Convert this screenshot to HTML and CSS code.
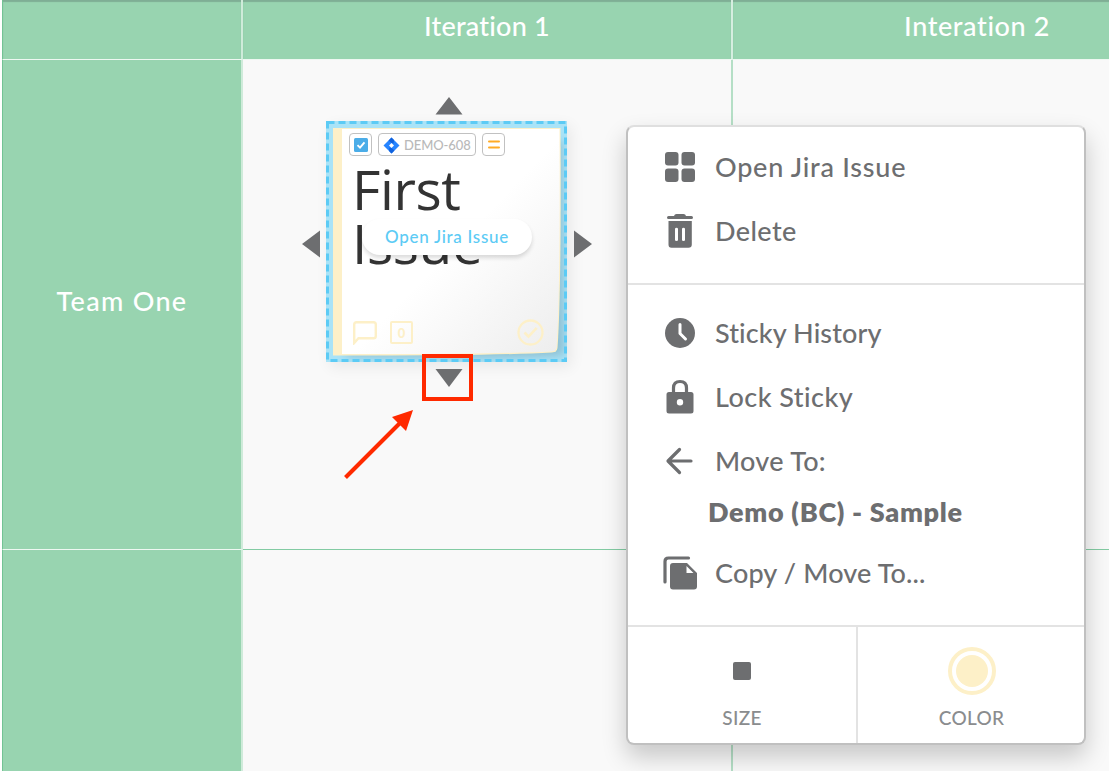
FILE: index.html
```html
<!DOCTYPE html>
<html lang="en">
<head>
<meta charset="utf-8">
<title>Program Board</title>
<link rel="stylesheet" href="styles.css">
</head>
<body>
<main class="board">
  <div class="cell head corner"></div>
  <div class="cell head"><span class="t-iter1">Iteration 1</span></div>
  <div class="cell head last"><span class="t-iter2">Interation 2</span></div>
  <div class="cell team"><span class="t-team">Team One</span></div>
  <div class="cell"></div>
  <div class="cell last"></div>
  <div class="cell team"></div>
  <div class="cell"></div>
  <div class="cell last"></div>
</main>

<section class="sticky">
  <svg class="paper" width="241" height="241" viewBox="0 0 241 241">
    <defs>
      <linearGradient id="sheet" x1="0" y1="0" x2="1" y2="1">
        <stop offset=".52" stop-color="#fff"/><stop offset="1" stop-color="#ededed"/>
      </linearGradient>
      <filter id="soft" x="-10%" y="-10%" width="125%" height="125%"><feGaussianBlur stdDeviation="5"/></filter>
    </defs>
    <rect width="241" height="241" fill="#a9e3f7"/>
    <path d="M20 20H236L238 234Q180 238 20 235Z" fill="#668899" opacity=".4" filter="url(#soft)"/>
    <path d="M7 7H234.500Q235.500 170 231.500 227Q231 231 226 231.500Q160 235 7 234.500Z" fill="#fdf0c8"/>
    <path d="M16 8H233.500Q234.500 170 230.500 226Q230 230 225 230.500Q160 233.500 16 233Z" fill="url(#sheet)"/>
    <rect x="1.500" y="1.500" width="238" height="238" fill="none" stroke="#5ccbf5" stroke-width="3" stroke-dasharray="7 4"/>
  </svg>
  <div class="badges">
    <span class="badge"><svg width="14" height="14" viewBox="0 0 14 14"><rect width="14" height="14" rx="1.500" fill="#4bade8"/><path d="M3.500 7.200L6 9.700L10.500 4.300" fill="none" stroke="#fff" stroke-width="1.900"/></svg></span>
    <span class="badge key"><svg width="17" height="17" viewBox="0 0 17 17"><path d="M8.500.5L16.500 8.500L8.500 16.500L.5 8.500Z" fill="#2684ff"/><path d="M8.500.5L11 3L10.500 6.500L8.500 6L5.500 3.500ZM8.500 16.500L11.500 13.500L8.500 11L6.500 10.500L6 14Z" fill="#1062de"/><path d="M8.500 6L11 8.500L8.500 11L6 8.500Z" fill="#fff"/></svg><span class="t-key">DEMO-608</span></span>
    <span class="badge"><svg width="12" height="10" viewBox="0 0 12 10"><path d="M1 1.500H11M1 7.500H11" stroke="#ffab26" stroke-width="2" stroke-linecap="round"/></svg></span>
  </div>
  <div class="title">First<br>Issue</div>
  <div class="pill"><span class="t-pill">Open Jira Issue</span></div>
  <div class="tools">
    <svg width="24" height="24" viewBox="0 0 24 24"><path d="M1.200 22V3.500Q1.200 1.200 3.500 1.200H20.500Q22.800 1.200 22.800 3.500V15Q22.800 17.300 20.500 17.300H5.500Z" fill="none" stroke="#fdf0c8" stroke-width="2.400"/></svg>
    <span class="count">0</span>
    <svg class="done" width="27" height="27" viewBox="0 0 27 27"><circle cx="13.500" cy="13.500" r="12" fill="none" stroke="#fdf0c8" stroke-width="2.300"/><path d="M7.500 13.500L11.500 17.700L19.700 8.800" fill="none" stroke="#fdf0c8" stroke-width="2.600"/></svg>
  </div>
</section>

<svg class="marks" width="310" height="410" viewBox="290 85 310 410">
  <path d="M449 97L462.500 114.500H435.500ZM449 387L435.500 369H462.500ZM302 244L320 230.500V257.500ZM592 244L574 230.500V257.500Z" fill="#6d6e70"/>
  <rect x="424" y="356" width="47" height="43" fill="none" stroke="#ff2a00" stroke-width="4"/>
  <path d="M345.500 477.500L401 422" stroke="#ff2a00" stroke-width="4"/>
  <path d="M413 410L392 417L406 431Z" fill="#ff2a00"/>
</svg>

<nav class="menu">
  <div class="group first">
    <div class="item"><svg viewBox="0 0 36 36"><g fill="#6d6e70"><rect x="3" y="3" width="13.500" height="13.500" rx="3"/><rect x="19.500" y="3" width="13.500" height="13.500" rx="3"/><rect x="3" y="19.500" width="13.500" height="13.500" rx="3"/><rect x="19.500" y="19.500" width="13.500" height="13.500" rx="3"/></g></svg><span class="t-open">Open Jira Issue</span></div>
    <div class="item"><svg viewBox="0 0 36 36"><path d="M5 4.500Q5 3 6.500 3H12Q12.500 1 14.500 1H21.500Q23.500 1 24 3H29.500Q31 3 31 4.500T29.500 6H6.500Q5 6 5 4.500Z" fill="#6d6e70"/><path fill-rule="evenodd" d="M6.500 8H29.800V31.500Q29.800 34.700 26.500 34.700H9.500Q6.500 34.700 6.500 31.500ZM13 16V27Q13 28 14.500 28T16 27V16Q16 14.700 14.500 14.700T13 16ZM20 16V27Q20 28 21.500 28T23 27V16Q23 14.700 21.500 14.700T20 16Z" fill="#6d6e70"/></svg><span class="t-del">Delete</span></div>
  </div>
  <div class="group second">
    <div class="item"><svg viewBox="0 0 36 36"><circle cx="18" cy="18" r="15" fill="#6d6e70"/><path d="M18 9.500V18.500L23.500 24" fill="none" stroke="#fff" stroke-width="3" stroke-linecap="round" stroke-linejoin="round"/></svg><span class="t-hist">Sticky History</span></div>
    <div class="item"><svg viewBox="0 0 36 36"><path d="M11.500 15V9Q11.500 2.500 18 2.500T24.500 9V15" fill="none" stroke="#6d6e70" stroke-width="3.200"/><path fill-rule="evenodd" d="M7 13H29Q31.500 13 31.500 15.500V32Q31.500 34.500 29 34.500H7Q4.500 34.500 4.500 32V15.500Q4.500 13 7 13ZM18 20A3.200 3.200 0 1 0 18 26.400A3.200 3.200 0 1 0 18 20Z" fill="#6d6e70"/></svg><span class="t-lock">Lock Sticky</span></div>
    <div class="item"><svg viewBox="0 0 36 36"><path d="M17.500 6.500L6 18L17.500 29.500M6.500 18H29" fill="none" stroke="#6d6e70" stroke-width="3.200" stroke-linecap="round" stroke-linejoin="round"/></svg><span class="t-move">Move To:</span></div>
    <div class="target"><span class="t-demo">Demo (BC) - Sample</span></div>
    <div class="item"><svg viewBox="0 0 36 36"><path d="M3 27V6.500Q3 3 6.500 3H26.500" fill="none" stroke="#6d6e70" stroke-width="3.200" stroke-linecap="round"/><path fill-rule="evenodd" d="M11 8H25L35 18V31.500Q35 34.500 32 34.500H11Q8 34.500 8 31.500V11Q8 8 11 8ZM24.500 11V18H31.500Z" fill="#6d6e70"/></svg><span class="t-copy">Copy / Move To...</span></div>
  </div>
  <div class="bottom">
    <div class="option"><div class="swatch"><i class="square"></i></div><span class="t-size">SIZE</span></div>
    <div class="option"><div class="swatch"><i class="ring"></i></div><span class="t-color">COLOR</span></div>
  </div>
</nav>
</body>
</html>
```
FILE: styles.css
```css
* { box-sizing: border-box; }
body {
  margin: 0;
  width: 1109px;
  height: 771px;
  overflow: hidden;
  position: relative;
  background: #fff;
  font-family: Lato, "Liberation Sans", sans-serif;
  font-weight: 500;
  font-variant-ligatures: none;
  color: #6d6e70;
}
span { white-space: nowrap; }
.board {
  display: grid;
  grid-template-columns: 241px 490px 490px;
  grid-template-rows: 60px 490px 490px;
  margin-left: 2px;
  width: 1107px;
  height: 771px;
  overflow: hidden;
  background: #f9f9f9;
}
.cell {
  display: flex;
  align-items: center;
  justify-content: center;
  border-right: 2px solid #b5dfc6;
  border-bottom: 1px solid #83cba3;
}
.cell.head, .cell.team {
  background: #98d4b0;
  border-color: #eef8f2;
  color: #fff;
  font-size: 27px;
}
.cell.head { border-right-color: #d6eee0; box-shadow: inset 0 2px 1px #7fae95; padding-bottom: 8px; }
.cell.team, .cell.corner { border-left: 1px solid #72c394; border-right: 2px solid #cfebda; }
.cell.team { padding-bottom: 8px; }
.t-iter1 { letter-spacing: .2px; }
.t-iter2 { letter-spacing: .6px; }
.t-team { letter-spacing: 1.3px; }

.sticky {
  position: absolute;
  z-index: 1;
  left: 326px;
  top: 121px;
  width: 241px;
  height: 241px;
  padding: 12px 23px 16px 23px;
  display: flex;
  flex-direction: column;
  box-shadow: 4px 5px 14px rgba(0,0,0,.07);
}
.paper { position: absolute; left: 0; top: 0; z-index: -1; }
.badges { display: flex; gap: 6px; height: 23px; }
.badge {
  width: 23px;
  height: 23px;
  border: 1.500px solid #c1c1c1;
  border-radius: 4px;
  display: flex;
  align-items: center;
  justify-content: center;
}
.key { width: 98px; justify-content: flex-start; gap: 4px; padding: 1px 0 0 4px; color: #b9b9b9; font-size: 13px; }
.t-key { letter-spacing: -.1px; }
.title {
  margin: 6px 0 0 3px;
  font: 400 55px/54px "Open Sans", "Noto Sans", sans-serif;
  letter-spacing: -.4px;
  color: #333;
}
.pill {
  position: absolute;
  left: 36px;
  top: 98px;
  width: 170px;
  height: 36px;
  padding-bottom: 1px;
  border-radius: 18px;
  background: #fff;
  box-shadow: 0 3px 4px rgba(0,0,0,.14);
  display: flex;
  align-items: center;
  justify-content: center;
  color: #5ccbf5;
  font-size: 17px;
  letter-spacing: .7px;
}
.tools { display: flex; align-items: center; gap: 13px; margin-top: auto; padding-left: 4px; }
.count {
  width: 23px;
  height: 23px;
  border: 2px solid #fdf0c8;
  border-radius: 2px;
  color: #fdf0c8;
  display: flex;
  align-items: center;
  justify-content: center;
  font-size: 13px;
  font-weight: 900;
}
.done { margin-left: auto; }
.marks { position: absolute; left: 290px; top: 85px; z-index: 2; }

.menu {
  position: absolute;
  z-index: 3;
  left: 626px;
  top: 125px;
  width: 460px;
  height: 620px;
  display: flex;
  flex-direction: column;
  background: #fff;
  background-clip: padding-box;
  border: 2px solid #c0c0c0;
  border-top-color: #dfdfdf;
  border-radius: 8px;
  box-shadow: 0 12px 24px rgba(0,0,0,.2);
  font-size: 27px;
}
.group { border-bottom: 2px solid #e3e3e3; padding-left: 34px; }
.first { height: 158px; padding-top: 8px; }
.second { height: 342px; padding-top: 16px; }
.item { display: flex; align-items: center; height: 64px; gap: 17px; }
.item svg { width: 36px; height: 36px; flex: none; }
.item span { padding-bottom: 2px; }
.t-open { letter-spacing: .75px; }
.t-del { letter-spacing: .4px; }
.t-hist { letter-spacing: .1px; }
.t-lock { letter-spacing: .45px; }
.t-move { letter-spacing: .3px; }
.t-copy { letter-spacing: .15px; }
.target { display: flex; align-items: center; height: 48px; padding: 0 0 12px 46px; font-weight: 800; letter-spacing: .7px; }
.bottom { display: grid; grid-template-columns: 230px 1fr; flex: 1; }
.option { display: flex; flex-direction: column; align-items: center; padding-top: 20px; font-size: 19px; letter-spacing: .3px; color: #8a8c8e; }
.option:first-child { border-right: 2px solid #e3e3e3; }
.option:last-child { padding-left: 1px; }
.swatch { width: 48px; height: 48px; display: flex; align-items: center; justify-content: center; margin-bottom: 11px; }
.square { width: 18px; height: 18px; border-radius: 2px; background: #6d6e70; }
.ring { width: 48px; height: 48px; border-radius: 50%; border: 4px solid #fdf0c8; padding: 4px; background: #fdf0c8 content-box; }
```
